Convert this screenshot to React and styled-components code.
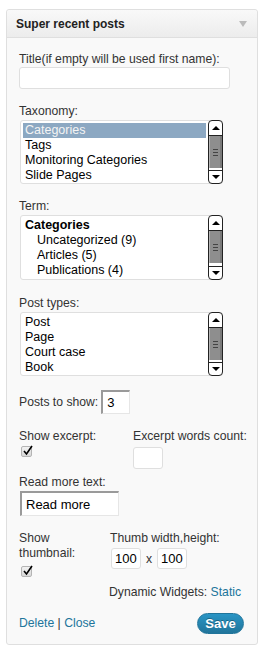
import React from 'react';
import styled, { createGlobalStyle } from 'styled-components';

const GlobalStyle = createGlobalStyle`
  body {
    margin: 0;
    background: #fff;
    font-family: "Liberation Sans", Arial, sans-serif;
    font-size: 12.2px;
    color: #333;
  }
`;

const Widget = styled.div`
  margin: 9px 7px 0 6px;
  width: 250px;
  border: 1px solid #dfdfdf;
  border-radius: 3px;
  background: #f9f9f9;
`;

const Header = styled.div`
  height: 27px;
  display: flex;
  align-items: center;
  justify-content: space-between;
  padding: 0 9px;
  background: linear-gradient(#f9f9f9, #ececec);
  border-bottom: 1px solid #dfdfdf;
  border-radius: 3px 3px 0 0;
`;

const HeaderTitle = styled.h3`
  margin: 0;
  font-size: 12px;
  font-weight: bold;
  color: #222;
`;

const Arrow = styled.span`
  width: 0;
  height: 0;
  border-left: 4px solid transparent;
  border-right: 4px solid transparent;
  border-top: 6px solid #bbb;
  margin-right: 1px;
`;

const Body = styled.div`
  padding: 14px 12px 10px 12px;
`;

const Label = styled.div`
  line-height: 15px;
  margin-top: ${p => p.$mt || 0}px;
  color: #333;
`;

const TextInput = styled.div`
  box-sizing: border-box;
  width: ${p => p.$w}px;
  height: ${p => p.$h || 22}px;
  margin-top: ${p => p.$mt || 0}px;
  background: #fff;
  border: 1px solid #dfdfdf;
  border-radius: 3px;
  padding: 0 3px;
  display: flex;
  align-items: center;
  font-size: 13px;
  color: #000;
`;

const InsetInput = styled.div`
  box-sizing: border-box;
  width: ${p => p.$w}px;
  height: ${p => p.$h}px;
  margin-top: ${p => p.$mt || 0}px;
  background: #fff;
  border-top: 2px solid #9a9a9a;
  border-left: 2px solid #9a9a9a;
  border-right: 1px solid #e6e6e6;
  border-bottom: 1px solid #e6e6e6;
  padding: 0 4px;
  display: flex;
  align-items: center;
  font-size: 13px;
  color: #000;
`;

const ListBox = styled.div`
  box-sizing: border-box;
  display: flex;
  width: 203px;
  height: ${p => p.$h || 64}px;
  margin: 1px 0 0 1px;
  background: #fff;
  border: 1px solid #dfdfdf;
  border-radius: 3px;
`;

const Options = styled.div`
  flex: 1;
  padding: 2px 2px 0 2px;
  overflow: hidden;
`;

const Option = styled.div`
  height: 15px;
  line-height: 15px;
  padding-left: ${p => (p.$indent ? 14 : 2)}px;
  font-size: 12.5px;
  font-weight: ${p => (p.$bold ? 'bold' : 'normal')};
  background: ${p => (p.$selected ? '#8ca8c2' : 'transparent')};
  color: ${p => (p.$selected ? '#f4f4f4' : '#000')};
  white-space: nowrap;
`;

const Scroll = styled.div`
  box-sizing: border-box;
  width: 15px;
  margin: -1px -1px -1px 0;
  border: 1px solid #222;
  border-radius: 4px;
  background: #fff;
  display: flex;
  flex-direction: column;
  overflow: hidden;
`;

const ScrollBtn = styled.div`
  height: ${p => p.$h}px;
  display: flex;
  align-items: center;
  justify-content: center;
  border-${p => (p.$up ? 'bottom' : 'top')}: 1px solid #222;
`;

const Tri = styled.span`
  width: 0;
  height: 0;
  border-left: 4px solid transparent;
  border-right: 4px solid transparent;
  ${p => (p.$up ? 'border-bottom: 4px solid #000;' : 'border-top: 4px solid #000;')}
`;

const Thumb = styled.div`
  height: 32px;
  background: #8e8e8e;
  border-left: 1px solid #b5b5b5;
  border-right: 2px solid #7a7a7a;
  display: flex;
  flex-direction: column;
  align-items: center;
  justify-content: center;
  gap: 2px;
`;

const Grip = styled.span`
  width: 5px;
  height: 1px;
  background: #444;
`;

const Track = styled.div`
  flex: 1;
`;

const Row = styled.div`
  display: flex;
  align-items: ${p => p.$align || 'flex-start'};
  margin-top: ${p => p.$mt || 0}px;
`;

const Col = styled.div`
  width: ${p => (p.$w ? `${p.$w}px` : 'auto')};
  flex: ${p => (p.$w ? 'none' : '1')};
  white-space: ${p => (p.$w ? 'normal' : 'nowrap')};
`;

const CheckBox = styled.span`
  position: relative;
  display: block;
  box-sizing: border-box;
  width: 11px;
  height: 11px;
  margin: ${p => p.$mt || 0}px 0 0 2px;
  border: 1px solid #b4b4b4;
  border-radius: 2px;
  background: linear-gradient(#f2f2f2, #d8d8d8);

  svg {
    position: absolute;
    left: 0;
    top: -3px;
  }
`;

const InlineRow = styled.div`
  display: flex;
  align-items: center;
  gap: 5px;
  margin-top: 2px;
`;

const Link = styled.a`
  color: #21759b;
  text-decoration: none;
`;

const Dynamic = styled.div`
  margin: 8px 0 0 90px;
  line-height: 15px;
  white-space: nowrap;
`;

const Footer = styled.div`
  display: flex;
  align-items: center;
  justify-content: space-between;
  margin-top: 13px;
`;

const Links = styled.div`
  color: #333;
  line-height: 15px;
`;

const SaveButton = styled.button`
  box-sizing: border-box;
  height: 21px;
  width: 47px;
  margin-right: 1px;
  padding: 0;
  border: 1px solid #21759b;
  border-radius: 11px;
  background: linear-gradient(#2a95c5, #21759b);
  color: #fff;
  font-family: "Liberation Sans", Arial, sans-serif;
  font-size: 13px;
  font-weight: bold;
  text-shadow: 0 -1px 0 rgba(0, 0, 0, 0.3);
`;

function Check({ mt }) {
  return (
    <CheckBox $mt={mt}>
      <svg width="12" height="12" viewBox="0 0 12 12">
        <path d="M2 7 L4.5 10 L10 2" fill="none" stroke="#000" strokeWidth="1.6" />
      </svg>
    </CheckBox>
  );
}

function ScrollBar() {
  return (
    <Scroll>
      <ScrollBtn $up $h={14}><Tri $up /></ScrollBtn>
      <Thumb>
        <Grip />
        <Grip />
        <Grip />
      </Thumb>
      <Track />
      <ScrollBtn $h={12}><Tri /></ScrollBtn>
    </Scroll>
  );
}

function List({ items, h }) {
  return (
    <ListBox $h={h}>
      <Options>
        {items.map(it => (
          <Option key={it.label} $selected={it.selected} $bold={it.bold} $indent={it.indent}>
            {it.label}
          </Option>
        ))}
      </Options>
      <ScrollBar />
    </ListBox>
  );
}

export default function App() {
  return (
    <>
      <GlobalStyle />
      <Widget>
        <Header>
          <HeaderTitle>Super recent posts</HeaderTitle>
          <Arrow />
        </Header>
        <Body>
          <Label>Title(if empty will be used first name):</Label>
          <TextInput $w={211} />

          <Label $mt={15}>Taxonomy:</Label>
          <List
            items={[
              { label: 'Categories', selected: true },
              { label: 'Tags' },
              { label: 'Monitoring Categories' },
              { label: 'Slide Pages' },
            ]}
          />

          <Label $mt={15}>Term:</Label>
          <List
            h={65}
            items={[
              { label: 'Categories', bold: true },
              { label: 'Uncategorized (9)', indent: true },
              { label: 'Articles (5)', indent: true },
              { label: 'Publications (4)', indent: true },
            ]}
          />

          <Label $mt={16}>Post types:</Label>
          <List
            items={[
              { label: 'Post' },
              { label: 'Page' },
              { label: 'Court case' },
              { label: 'Book' },
            ]}
          />

          <Row $mt={14} $align="center">
            <Label>Posts to show:</Label>
            <InsetInput $w={29} $h={24} style={{ marginLeft: 3 }}>3</InsetInput>
          </Row>

          <Row $mt={15}>
            <Col $w={114}>
              <Label>Show excerpt:</Label>
              <Check mt={2} />
            </Col>
            <Col>
              <Label>Excerpt words count:</Label>
              <TextInput $w={30} $mt={3} />
            </Col>
          </Row>

          <Label $mt={6}>Read more text:</Label>
          <InsetInput $w={99} $h={25} $mt={1} style={{ marginLeft: 1 }}>Read more</InsetInput>

          <Row $mt={15}>
            <Col $w={91}>
              <Label style={{ width: 80 }}>Show thumbnail:</Label>
              <Check mt={5} />
            </Col>
            <Col>
              <Label>Thumb width,height:</Label>
              <InlineRow>
                <TextInput $w={30} $h={21} style={{ marginLeft: 1 }}>100</TextInput>
                <span>x</span>
                <TextInput $w={30} $h={21}>100</TextInput>
              </InlineRow>
            </Col>
          </Row>

          <Dynamic>
            Dynamic Widgets: <Link href="#">Static</Link>
          </Dynamic>

          <Footer>
            <Links>
              <Link href="#">Delete</Link> | <Link href="#">Close</Link>
            </Links>
            <SaveButton>Save</SaveButton>
          </Footer>
        </Body>
      </Widget>
    </>
  );
}
